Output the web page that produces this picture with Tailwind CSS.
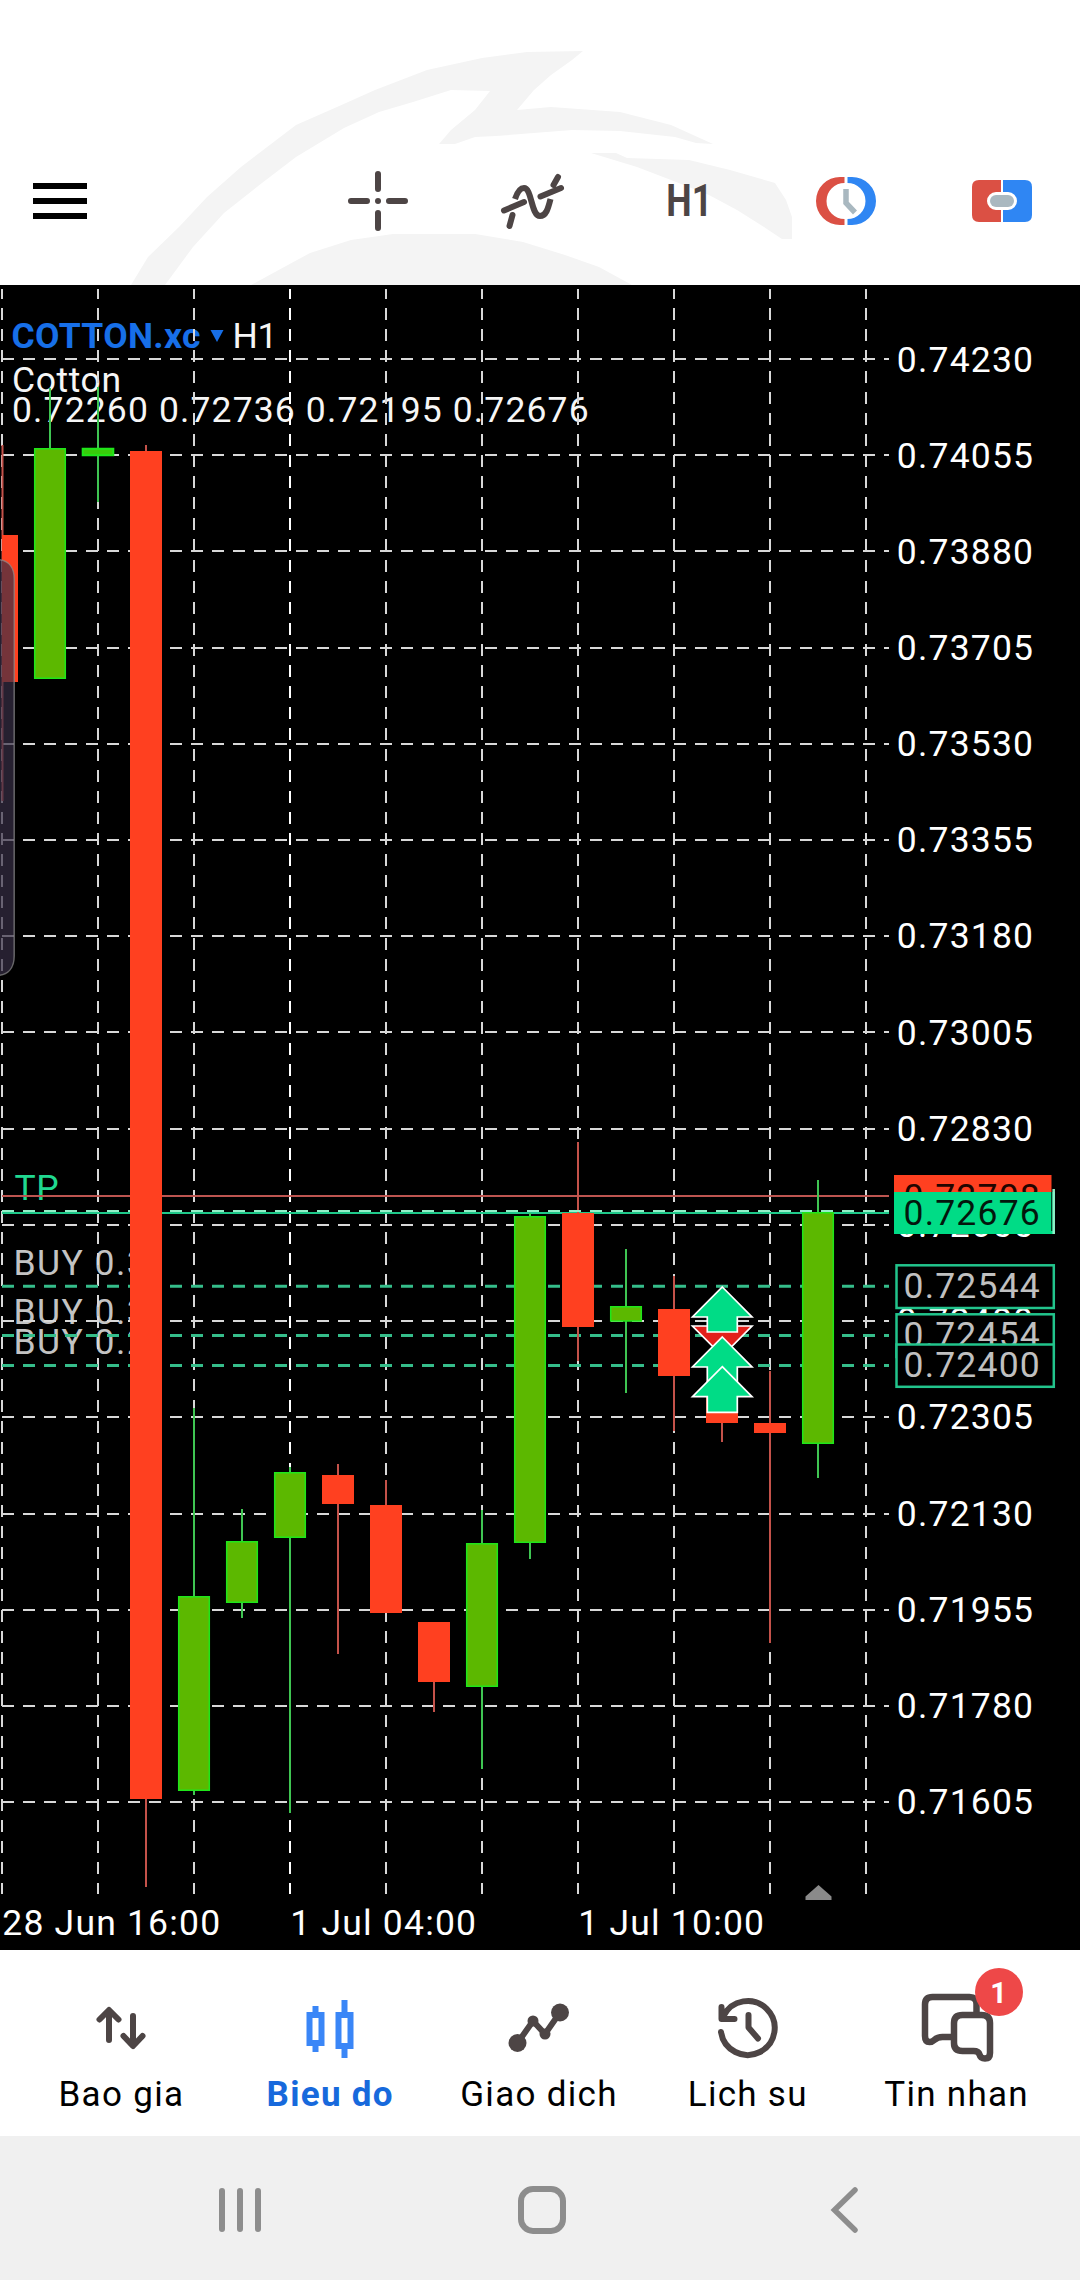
<!DOCTYPE html>
<html lang="vi">
<head>
<meta charset="utf-8">
<title>COTTON.xc H1</title>
<script src="https://cdn.jsdelivr.net/npm/@tailwindcss/browser@4"></script>
</head>
<body class="w-[1080px] h-[2280px] overflow-hidden bg-white flex flex-col font-['Roboto',sans-serif]">

<!-- Toolbar -->
<header class="relative h-[285px] shrink-0 flex items-end overflow-hidden bg-white">
  <svg class="absolute inset-0" width="1080" height="285" viewBox="0 0 1080 285" fill="#f4f4f4">
    <path d="M131 285L148 257L179 227L207 197L241 167L296 125L337 107L375 90L427 70L482 58L527 52L583 51L572 60L551 75L534 90L517 110L551 107L620 112L671 125L713 144L696 143L675 137L620 131L572 130L496 136L475 137L455 144L439 144L451 130L475 110L490 91L451 90L413 102L379 112L344 128L296 157L262 183L224 213L193 247L165 285Z"/>
    <path d="M591 153L616 153L627 158L689 160L730 170L775 183L786 200L792 217L792 239L782 239L764 227L737 210L709 195L671 180L637 167Z"/>
    <path d="M251 285L275 272L310 253L351 240L393 234L475 234L523 242L565 255L599 267L632 285Z"/>
  </svg>
  <div class="relative flex w-full h-[168px] items-center">
    <svg class="ml-[30px]" width="60" height="60" viewBox="30 171 60 60"><path d="M33 186H87M33 201H87M33 216H87" stroke="#000" stroke-width="6"/></svg>
    <svg class="ml-[252px]" width="72" height="72" viewBox="342 165 72 72" fill="none" stroke="#4d4545" stroke-width="6" stroke-linecap="round"><path d="M378 174V189M378 213V228M351 201H367M389 201H405"/><circle cx="378" cy="201" r="3" fill="#4d4545" stroke="none"/></svg>
    <svg class="ml-[84px]" width="72" height="72" viewBox="498 165 72 72" fill="none" stroke="#4d4545" stroke-width="6" stroke-linecap="round"><path d="M504 210.500L524 202M540.500 196.500L561 188M509.500 226L512.500 215M553.500 185L558 177"/><path stroke-linecap="butt" d="M515 199C518 190 521 188 524 188C532 188 531 216 540 216C546 216 548 209 550.500 199"/></svg>
    <svg class="ml-[84px] overflow-visible" width="72" height="72" viewBox="654 165 72 72"><text x="666.300" y="216.300" font-size="45" font-weight="700" fill="#4d4545" textLength="46" lengthAdjust="spacingAndGlyphs">H1</text></svg>
    <svg class="ml-[84px]" width="72" height="60" viewBox="810 171 72 60"><path fill="#db5044" d="M844.500 177H840A24 24 0 0 0 840 225H844.500V219A18 18 0 0 1 844.500 183Z"/><path fill="#2f86f3" d="M847.500 177H852A24 24 0 0 1 852 225H847.500V219A18 18 0 0 0 847.500 183Z"/><path fill="none" stroke="#a9b8c0" stroke-width="5.500" d="M846 189V203L855 212.500"/></svg>
    <svg class="ml-[84px]" width="72" height="60" viewBox="966 171 72 60"><path fill="#db5044" d="M1001 180H979Q972 180 972 187V215Q972 222 979 222H1001V210H996A9 9 0 0 1 996 192H1001Z"/><path fill="#2f86f3" d="M1003 180H1025Q1032 180 1032 187V215Q1032 222 1025 222H1003V210H1008A9 9 0 0 0 1008 192H1003Z"/><rect x="990" y="195" width="24" height="12" rx="6" fill="#a9b8c0"/></svg>
  </div>
</header>

<!-- Price chart -->
<main class="h-[1665px] shrink-0 bg-black">
<svg width="1080" height="1665" viewBox="0 285 1080 1665" font-size="35.500" fill="#fff">
  <!-- Symbol header -->
  <g fill="#f6f6f6">
    <text x="11.500" y="347.800" fill="#176fe8" font-weight="700" font-size="35.500" textLength="189">COTTON.xc</text>
    <path d="M210.500 330H223.500L217 342Z" fill="#176fe8"/>
    <text x="232.500" y="347.800" textLength="45">H1</text>
    <text x="12" y="391.800" textLength="109">Cotton</text>
    <text x="12" y="422.300" letter-spacing="1.130">0.72260 0.72736 0.72195 0.72676</text>
  </g>
  <g fill="#c3c3c3">
    <text x="14.500" y="1199.500" fill="#20d890" letter-spacing=".6">TP</text>
    <text x="13.500" y="1274.500" letter-spacing="1.450">BUY 0.3</text>
    <text x="13.500" y="1323.700" letter-spacing="1.450">BUY 0.3</text>
    <text x="13.500" y="1353.700" letter-spacing="1.450">BUY 0.2</text>
  </g>
  <!-- Grid -->
  <g stroke="#d8d8d8" stroke-width="2" stroke-dasharray="12 9" fill="none">
    <path d="M2 359H889M2 455H889M2 551H889M2 648H889M2 744H889M2 840H889M2 936H889M2 1032H889M2 1129H889M2 1225H889M2 1321H889M2 1417H889M2 1514H889M2 1610H889M2 1706H889M2 1802H889"/>
    <path stroke-dashoffset="2" d="M2 289V1894M98 289V1894M194 289V1894M386 289V1894M482 289V1894M578 289V1894M674 289V1894M770 289V1894M866 289V1894"/>
    <path stroke-dashoffset="2" stroke="#fff" d="M290 289V1894"/>
  </g>
  <!-- Order levels -->
  <path d="M2 1196H889" stroke="#bd5550" stroke-width="2"/>
  <path d="M2 1213H889" stroke="#1fc98a" stroke-width="2"/>
  <path d="M2 1286.300H889M2 1335.400H889M2 1365.400H889" stroke="#35bd8a" stroke-width="3" stroke-dasharray="12 9"/>
  <!-- Candle wicks -->
  <g stroke="#c4524a" stroke-width="2">
    <path d="M2.500 445V801M146 445V1887M338 1464V1654M386 1480V1612M434 1622V1712M578 1142V1361M674 1276V1431M722 1420V1442M770 1371V1643"/>
  </g>
  <g stroke="#3fc552" stroke-width="2">
    <path d="M50 388V679M98 387V502M194 1408V1795M242 1509V1618M290 1467V1813M482 1510V1769M530 1213V1559M626 1249V1393M818 1180V1478"/>
  </g>
  <!-- Candle bodies -->
  <g fill="#ff4020">
    <path d="M2 535H18V682H2ZM130 451H162V1799H130ZM322 1475H354V1504H322ZM370 1505H402V1613H370ZM418 1622H450V1682H418ZM562 1213H594V1327H562ZM658 1309H690V1376H658ZM706 1390H738V1423H706ZM754 1423H786V1433H754Z"/>
  </g>
  <g fill="#5cb800" stroke="#1fe61a" stroke-width="1.500">
    <path d="M34.700 448.700H65.300V678.300H34.700ZM178.700 1596.700H209.300V1790.300H178.700ZM226.700 1541.700H257.300V1602.300H226.700ZM274.700 1472.700H305.300V1537.300H274.700ZM466.700 1543.700H497.300V1686.300H466.700ZM514.700 1216.700H545.300V1542.300H514.700ZM610.700 1306.700H641.300V1321H610.700ZM802.700 1212.700H833.300V1443.300H802.700Z"/>
    <path d="M82.700 448.700H113.300V455.300H82.700Z" fill="#38cc0a" stroke-width="2"/>
  </g>
  <path d="M2 1211H889" stroke="#94efc9" stroke-width="2" stroke-dasharray="12 9"/>
  <rect x="130" y="1195" width="32" height="20" fill="#ff4020"/>
  <!-- Deal arrows -->
  <g stroke="#fff" stroke-width="1.700" fill="#00dc86">
    <path fill="#e2201a" d="M692.500 1326H752L722.300 1356Z"/>
    <path d="M722.300 1287L752 1317H737.300V1332H707.300V1317H692.500Z"/>
    <path d="M722.300 1337L752 1367H737.300V1390H707.300V1367H692.500Z"/>
    <path d="M722.300 1366.700L752 1396.700H737.300V1412.300H707.300V1396.700H692.500Z"/>
  </g>
  <!-- Price axis -->
  <g letter-spacing="1.200">
    <text x="896.800" y="371.500">0.74230</text>
    <text x="896.800" y="467.500">0.74055</text>
    <text x="896.800" y="563.500">0.73880</text>
    <text x="896.800" y="660.300">0.73705</text>
    <text x="896.800" y="756.300">0.73530</text>
    <text x="896.800" y="852.300">0.73355</text>
    <text x="896.800" y="948.300">0.73180</text>
    <text x="896.800" y="1044.500">0.73005</text>
    <text x="896.800" y="1141.300">0.72830</text>
    <text x="896.800" y="1237.300">0.72655</text>
    <text x="896.800" y="1333.300">0.72480</text>
    <text x="896.800" y="1429.300">0.72305</text>
    <text x="896.800" y="1525.800">0.72130</text>
    <text x="896.800" y="1622">0.71955</text>
    <text x="896.800" y="1718">0.71780</text>
    <text x="896.800" y="1814">0.71605</text>
    <rect x="894" y="1175" width="157.500" height="44" fill="#ff4020"/>
    <text x="903.500" y="1208.800" fill="#230500">0.72708</text>
    <rect x="894" y="1192" width="161" height="42" fill="#00dc86"/>
    <path d="M1053.700 1189V1234" stroke="#8ff0c8" stroke-width="2.500"/>
    <path d="M1051.700 1192V1231" stroke="#062015" stroke-width="1"/>
    <text x="903.500" y="1225" fill="#03170d">0.72676</text>
    <g fill="#000" stroke="#22c48c" stroke-width="2.500">
      <rect x="896.500" y="1265.300" width="157.300" height="42.700"/>
      <rect x="896.500" y="1314.300" width="157.300" height="42.700"/>
    </g>
    <text x="903.500" y="1297.800" fill="#c0c0c0">0.72544</text>
    <text x="903.500" y="1346.800" fill="#c0c0c0">0.72454</text>
    <rect x="896.500" y="1344.500" width="157.300" height="42.300" fill="#000" stroke="#22c48c" stroke-width="2.500"/>
    <text x="903.500" y="1376.800" fill="#c0c0c0">0.72400</text>
  </g>
  <!-- Time axis -->
  <g letter-spacing="1.200">
    <text x="2.300" y="1934.500">28 Jun 16:00</text>
    <text x="290.300" y="1934.500">1 Jul 04:00</text>
    <text x="578.300" y="1934.500">1 Jul 10:00</text>
  </g>
  <path d="M818.500 1885L831.500 1896.500V1900H805.500V1896.500Z" fill="#8a8a8a"/>
  <!-- Edge panel handle -->
  <path d="M-4 559.500C8 559.500 14.200 567 14.200 579V956C14.200 968 8 975.500 -4 975.500Z" fill="#372e46" fill-opacity=".69" stroke="#8c8c8c" stroke-opacity=".7" stroke-width="1.500"/>
</svg>
</main>

<!-- Tab bar -->
<nav class="h-[186px] shrink-0 bg-white grid grid-cols-5 pl-[17px] pr-[19px] pt-[42px] text-[35px] leading-[41px] tracking-[1.3px] text-black">
  <div class="flex flex-col items-center gap-[10px]">
    <svg width="72" height="72" viewBox="86 1992 72 72" fill="none" stroke="#4d4545" stroke-width="6" stroke-linecap="round" stroke-linejoin="round"><path d="M110 2040V2011M100.500 2019.500L110 2010L119.500 2019.500M134 2016V2045M124.500 2036L134 2046L143.500 2036"/></svg>
    <span>Bao gia</span>
  </div>
  <div class="flex flex-col items-center gap-[10px]">
    <svg width="72" height="72" viewBox="295 1992 72 72" fill="none" stroke="#3a86f7" stroke-width="6"><path d="M310.500 2015H322.500V2043H310.500ZM339.500 2015H351.500V2046H339.500ZM316.500 2006V2015M316.500 2043V2052M345.500 2000V2015M345.500 2046V2058"/></svg>
    <span class="font-bold text-[#1769dc]">Bieu do</span>
  </div>
  <div class="flex flex-col items-center gap-[10px]">
    <svg width="72" height="72" viewBox="504 1992 72 72" fill="#4d4545"><path d="M518.500 2043L534 2021L546 2034L561 2012.500" fill="none" stroke="#4d4545" stroke-width="6"/><circle cx="518.500" cy="2043" r="9"/><circle cx="534" cy="2021" r="5.500"/><circle cx="546" cy="2034" r="5.500"/><circle cx="561" cy="2012.500" r="9"/></svg>
    <span>Giao dich</span>
  </div>
  <div class="flex flex-col items-center gap-[10px]">
    <svg width="72" height="72" viewBox="712.500 1992 72 72" fill="none" stroke="#4d4545" stroke-width="6" stroke-linecap="round" stroke-linejoin="round"><path d="M721.500 2032A27 27 0 1 0 724 2016M722 2007V2019H735M749 2015V2027.500L758.500 2038.500"/></svg>
    <span>Lich su</span>
  </div>
  <div class="flex flex-col items-center gap-[10px]">
    <div class="relative w-[72px] h-[72px]">
      <svg width="72" height="72" viewBox="921.500 1992 72 72" fill="none" stroke="#4d4545" stroke-width="6.500" stroke-linecap="round" class="overflow-visible"><path d="M977 2012V2004Q977 1997 970 1997H933Q925.500 1997 925.500 2004.500V2036Q925.500 2042 930 2042C936 2042 934 2037 943 2037H953"/><path d="M963 2015H982Q990.500 2015 990.500 2023V2053Q990.500 2058.500 985.500 2058.500Q981 2058.500 980 2054.500Q979 2051 974 2051H963Q954.500 2051 954.500 2043V2023Q954.500 2015 963 2015Z" fill="#fff"/></svg>
      <div class="absolute left-[54px] top-[-24px] w-[48px] h-[48px] rounded-full bg-[#ee4848] text-white font-bold text-[29px] leading-[50px] tracking-normal text-center">1</div>
    </div>
    <span>Tin nhan</span>
  </div>
</nav>

<!-- System navigation -->
<footer class="h-[144px] shrink-0 bg-[#f0f0f0] flex items-center pt-[4px] pl-[210px] pr-[204px] justify-between">
  <svg width="60" height="60" viewBox="210 2180 60 60" stroke="#8d8d8d" stroke-width="6" stroke-linecap="round"><path d="M222 2191V2229M240 2191V2229M258 2191V2229"/></svg>
  <svg width="60" height="60" viewBox="513 2180 60 60" fill="none" stroke="#8d8d8d" stroke-width="6"><rect x="521" y="2189" width="42" height="42" rx="12"/></svg>
  <svg width="60" height="60" viewBox="816 2180 60 60" fill="none" stroke="#8d8d8d" stroke-width="5.500" stroke-linecap="round"><path d="M855 2190L834.500 2210L855 2230"/></svg>
</footer>
</body>
</html>
